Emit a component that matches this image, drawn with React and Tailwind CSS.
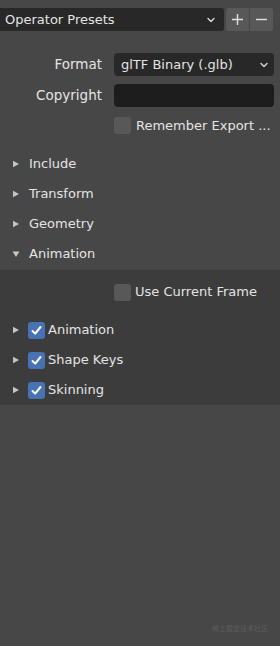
const font = { fontFamily: '"DejaVu Sans", "Noto Sans CJK SC", sans-serif' };

function Chevron({ className = "" }) {
  return (
    <svg width="10" height="10" viewBox="0 0 10 10" className={className}>
      <path d="M2 3.5 L5 6.5 L8 3.5" fill="none" stroke="#d8d8d8" strokeWidth="1.4" strokeLinecap="round" strokeLinejoin="round" />
    </svg>
  );
}

function Tri({ open }) {
  return (
    <svg width="8" height="8" viewBox="0 0 8 8" className="shrink-0">
      {open ? (
        <path d="M0.5 1.5 L7.5 1.5 L4 7 Z" fill="#c4c4c4" />
      ) : (
        <path d="M1 0.8 L7 4 L1 7.2 Z" fill="#c4c4c4" />
      )}
    </svg>
  );
}

function Check({ on }) {
  return (
    <div
      className={`w-[17px] h-[17px] rounded-[3px] flex items-center justify-center shrink-0 ${
        on ? "bg-[#4772b3]" : "bg-[#585858]"
      }`}
    >
      {on && (
        <svg width="13" height="13" viewBox="0 0 13 13">
          <path d="M2.5 7 L5.2 9.6 L10.5 3" fill="none" stroke="#ffffff" strokeWidth="2" strokeLinecap="round" strokeLinejoin="round" />
        </svg>
      )}
    </div>
  );
}

const sections = ["Include", "Transform", "Geometry"];
const subs = ["Animation", "Shape Keys", "Skinning"];

export default function App() {
  return (
    <div className="w-[280px] h-[646px] bg-[#474747] text-[#e4e4e4] text-[13px] relative overflow-hidden whitespace-nowrap" style={font}>
      <div className="flex items-center pt-[8px] h-[31px]">
        <div className="w-[224px] h-[23px] bg-[#282828] flex items-center pl-[5px] pr-[8px] rounded-r-[3px]">
          <span className="flex-1">Operator Presets</span>
          <Chevron />
        </div>
        <div className="ml-[2px] w-[23px] h-[23px] bg-[#585858] flex items-center justify-center rounded-l-[3px]">
          <svg width="13" height="13" viewBox="0 0 13 13">
            <path d="M6.5 1 V12 M1 6.5 H12" stroke="#e0e0e0" strokeWidth="1.4" />
          </svg>
        </div>
        <div className="ml-[1px] w-[23px] h-[23px] bg-[#585858] flex items-center justify-center rounded-r-[3px]">
          <svg width="13" height="13" viewBox="0 0 13 13">
            <path d="M1 6.5 H12" stroke="#e0e0e0" strokeWidth="1.4" />
          </svg>
        </div>
      </div>

      <div className="mt-[22px] flex items-center h-[23px]">
        <span className="w-[102px] text-right text-[13.5px]">Format</span>
        <div className="ml-[12px] w-[160px] h-[23px] bg-[#282828] rounded-[4px] flex items-center pl-[7px] pr-[5px]">
          <span className="flex-1">glTF Binary (.glb)</span>
          <Chevron />
        </div>
      </div>

      <div className="mt-[8px] flex items-center h-[23px]">
        <span className="w-[102px] text-right text-[13.5px]">Copyright</span>
        <div className="ml-[12px] w-[160px] h-[23px] bg-[#1d1d1d] rounded-[4px]" />
      </div>

      <div className="mt-[10px] flex items-center h-[17px] pl-[114px] gap-[5px]">
        <Check />
        <span>Remember Export ...</span>
      </div>

      <div className="mt-[15px]">
        {sections.map((s) => (
          <div key={s} className="h-[30px] flex items-center pl-[12px] gap-[9px]">
            <Tri />
            <span>{s}</span>
          </div>
        ))}
        <div className="h-[30px] flex items-center pl-[12px] gap-[9px]">
          <Tri open />
          <span>Animation</span>
        </div>
      </div>

      <div className="bg-[#3c3c3c] mt-[1px] pt-[13px]">
        <div className="flex items-center h-[18px] pl-[114px] gap-[4px]">
          <Check />
          <span>Use Current Frame</span>
        </div>
        <div className="mt-[14px]">
          {subs.map((s) => (
            <div key={s} className="h-[30px] flex items-center pl-[12px]">
              <Tri />
              <div className="ml-[8px]">
                <Check on />
              </div>
              <span className="ml-[3px]">{s}</span>
            </div>
          ))}
        </div>
      </div>

      <div className="absolute right-[12px] bottom-[12px] text-[7px] text-[#5c5c5c]">稀土掘金技术社区</div>
    </div>
  );
}
